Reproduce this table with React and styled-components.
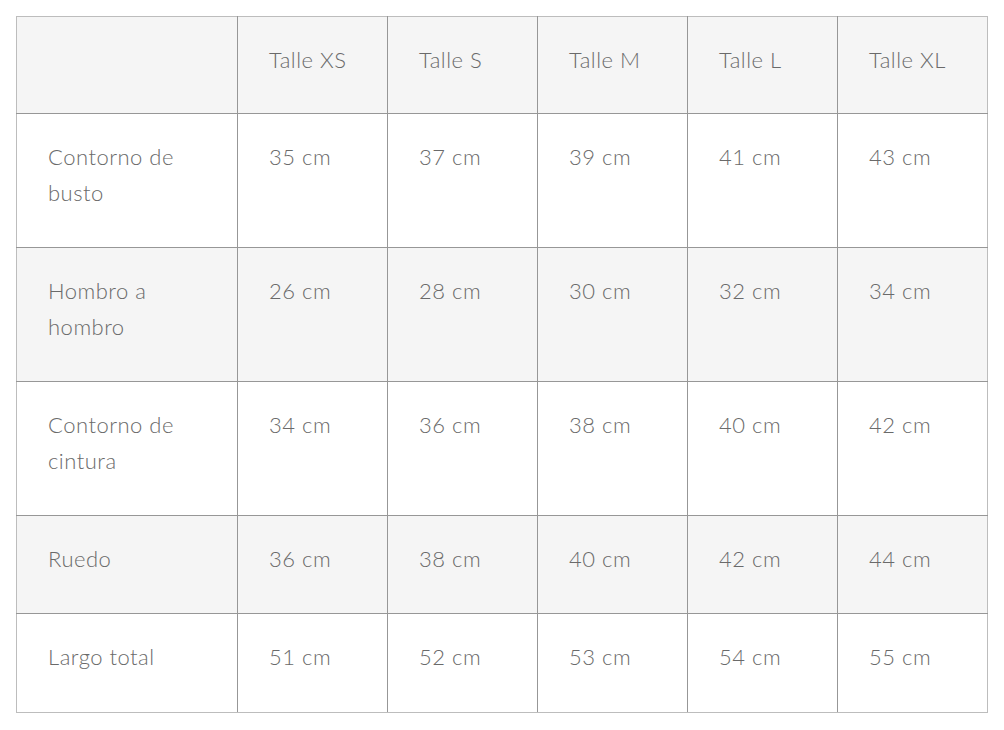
import React from 'react';
import styled, { createGlobalStyle } from 'styled-components';

const GlobalStyle = createGlobalStyle`
  body {
    margin: 0;
    padding: 16px;
    background: #ffffff;
    font-family: Lato, "Liberation Sans", sans-serif;
  }
`;

const Table = styled.table`
  width: 972px;
  border-collapse: collapse;
  table-layout: fixed;
  border: 1px solid #bdbdbd;
`;

const Col = styled.col`
  width: ${p => (p.$label ? '221px' : '150px')};
`;

const Row = styled.tr`
  background: ${p => (p.$shaded ? '#f5f5f5' : '#ffffff')};
`;

const Cell = styled.td`
  border: 1px solid #979797;
  padding: 25px 31px 36px;
  vertical-align: top;
  text-align: left;
  font-size: 22px;
  line-height: 36px;
  font-weight: 300;
  letter-spacing: 0.5px;
  color: #6a6a6a;

  tr:first-child > & { border-top-color: #bdbdbd; padding-bottom: 35px; }
  tr:last-child > & { border-bottom-color: #bdbdbd; padding-bottom: 37px; }
  &:first-child { border-left-color: #bdbdbd; }
  &:last-child { border-right-color: #bdbdbd; }
`;

const sizes = ['Talle XS', 'Talle S', 'Talle M', 'Talle L', 'Talle XL'];

const rows = [
  { label: 'Contorno de busto', values: [35, 37, 39, 41, 43] },
  { label: 'Hombro a hombro', values: [26, 28, 30, 32, 34] },
  { label: 'Contorno de cintura', values: [34, 36, 38, 40, 42] },
  { label: 'Ruedo', values: [36, 38, 40, 42, 44] },
  { label: 'Largo total', values: [51, 52, 53, 54, 55] },
];

export default function App() {
  return (
    <>
      <GlobalStyle />
      <Table>
        <colgroup>
          <Col $label />
          {sizes.map(s => <Col key={s} />)}
        </colgroup>
        <tbody>
          <Row $shaded>
            <Cell />
            {sizes.map(s => <Cell key={s}>{s}</Cell>)}
          </Row>
          {rows.map((r, i) => (
            <Row key={r.label} $shaded={i % 2 === 1}>
              <Cell>{r.label}</Cell>
              {r.values.map(v => <Cell key={v}>{v} cm</Cell>)}
            </Row>
          ))}
        </tbody>
      </Table>
    </>
  );
}
